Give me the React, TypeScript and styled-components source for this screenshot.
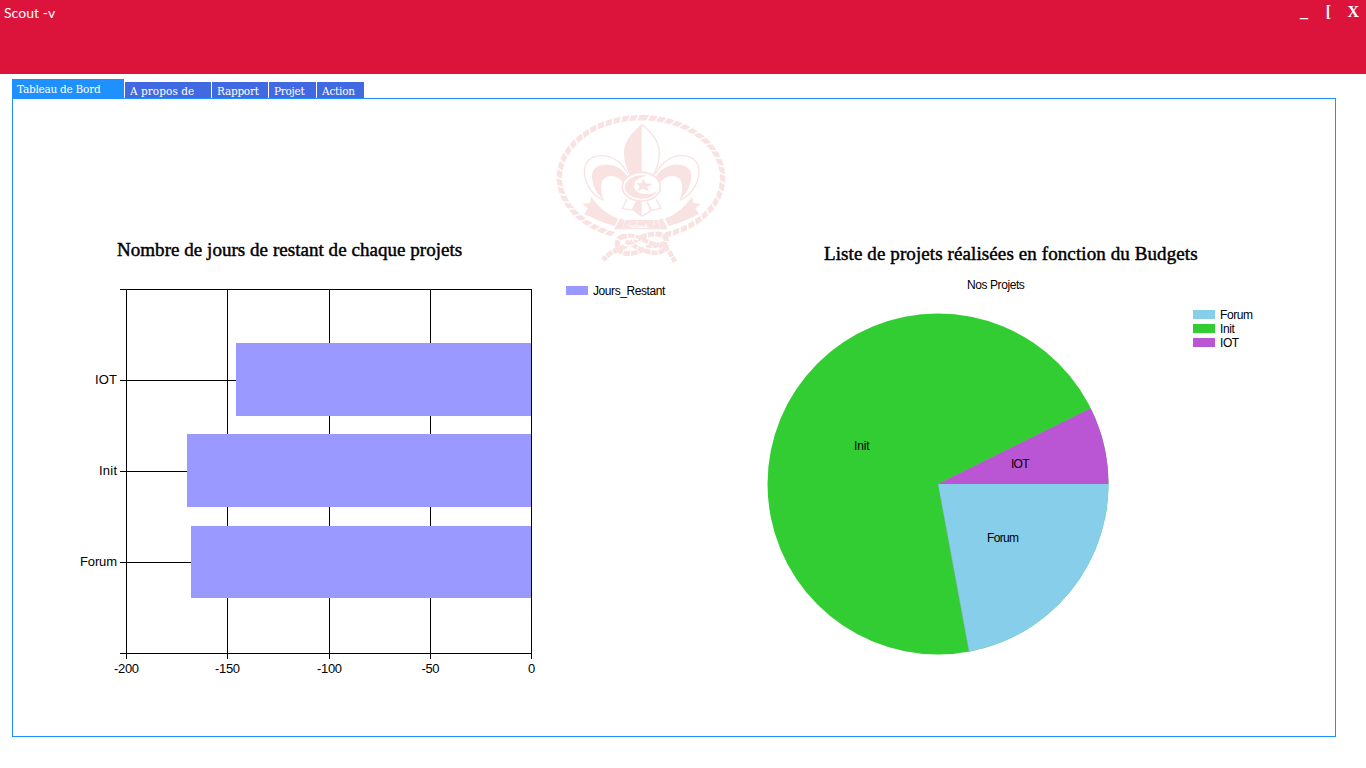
import React from 'react';
import styled, { createGlobalStyle } from 'styled-components';

const GlobalStyle = createGlobalStyle`
  * { box-sizing: border-box; }
  body { margin: 0; background: #fff; overflow: hidden; }
`;

const sans = '"Liberation Sans", Arial, sans-serif';
const serif = '"Liberation Serif", "Times New Roman", serif';

const Window = styled.div`
  width: 1366px;
  height: 768px;
  display: flex;
  flex-direction: column;
  background: #fff;
`;

const TitleBar = styled.header`
  height: 74px;
  flex: none;
  display: flex;
  justify-content: space-between;
  align-items: flex-start;
  background: #dc143c;
  color: #fff;
`;

const AppName = styled.h1`
  margin: 3px 0 0 4px;
  font: 400 14px/20px Lato, sans-serif;
  letter-spacing: 0.05px;
`;

const WindowControls = styled.div`
  display: flex;
  padding: 3px 7px 0 0;
`;

const ControlButton = styled.button<{ $width: number }>`
  width: ${(p) => p.$width}px;
  padding: 0;
  border: 0;
  background: none;
  color: #fff;
  font: 700 16px/18px ${serif};
  text-align: right;
`;

const TabBar = styled.nav`
  display: flex;
  align-items: flex-end;
  gap: 1px;
  height: 24px;
  flex: none;
  margin-left: 12px;
`;

const Tab = styled.button<{ $width: number; $active?: boolean; $spacing: number }>`
  width: ${(p) => p.$width}px;
  height: ${(p) => (p.$active ? 19 : 16)}px;
  padding: ${(p) => (p.$active ? 4 : 3)}px 0 0 5px;
  border: 0;
  background: ${(p) => (p.$active ? '#1e90ff' : '#4169e1')};
  color: #fff;
  font: 400 10.5px/13px "DejaVu Serif", serif;
  letter-spacing: ${(p) => p.$spacing}px;
  text-align: left;
  white-space: nowrap;
  display: flex;
`;

const Panel = styled.main`
  width: 1324px;
  height: 639px;
  flex: none;
  margin-left: 12px;
  border: 1px solid #1e90ff;
  display: grid;
  grid-template-columns: 532px 200px 1fr;
`;

const BarColumn = styled.section`
  padding-top: 139px;
`;

const CenterColumn = styled.section`
  padding-top: 6px;
`;

const PieColumn = styled.section`
  padding-top: 143px;
`;

const Heading = styled.h2<{ $indent: number; $spacing: number }>`
  margin: 0 0 0 ${(p) => p.$indent}px;
  font: 400 19px/24px ${serif};
  letter-spacing: ${(p) => p.$spacing}px;
  -webkit-text-stroke: 0.45px #000;
  white-space: nowrap;
`;

const Drawing = styled.svg`
  display: block;
  flex: none;
`;

const AxisText = styled.text`
  font: 13px ${sans};
`;

const SliceText = styled.text`
  font: 12px ${sans};
`;

const BarDrawing = styled(Drawing)`
  margin-top: 8px;
`;

const Subtitle = styled.p`
  margin: 12px 0 0 222px;
  font: 12px/14px ${sans};
  letter-spacing: -0.42px;
`;

const PieRow = styled.div`
  display: flex;
  gap: 73px;
  margin: 13px 0 0 15px;
`;

const Legend = styled.ul<{ $top: number; $left: number }>`
  margin: ${(p) => p.$top}px 0 0 ${(p) => p.$left}px;
  padding: 0;
  list-style: none;
`;

const LegendItem = styled.li`
  display: flex;
  align-items: center;
  gap: 5px;
  height: 14px;
  font: 12px/14px ${sans};
  letter-spacing: -0.42px;
`;

const Swatch = styled.span<{ $color: string }>`
  width: 22px;
  height: 9px;
  margin-top: -1px;
  background: ${(p) => p.$color};
`;

const tabs = [
  { label: 'Tableau de Bord', width: 112, spacing: -0.25 },
  { label: 'A propos de', width: 86, spacing: 0.05 },
  { label: 'Rapport', width: 56, spacing: -0.25 },
  { label: 'Projet', width: 47, spacing: -0.3 },
  { label: 'Action', width: 47, spacing: -0.2 },
];

const bars = [
  { label: 'IOT', x: 236, y: 343, h: 73, line: 380, lx: 95, lw: 22 },
  { label: 'Init', x: 187, y: 434, h: 73, line: 471, lx: 99, lw: 18 },
  { label: 'Forum', x: 191, y: 526, h: 72, line: 562, lx: 80, lw: 37 },
];

const ticks = [
  { label: '-200', x: 126, w: 25 },
  { label: '-150', x: 227, w: 25 },
  { label: '-100', x: 329, w: 25 },
  { label: '-50', x: 430, w: 18 },
  { label: '0', x: 531, w: 7 },
];

const series = [
  { label: 'Forum', color: '#87ceeb' },
  { label: 'Init', color: '#32cd32' },
  { label: 'IOT', color: '#ba55d3' },
];

function BarChart() {
  return (
    <BarDrawing width="532" height="420" viewBox="13 270 532 420">
      <g shapeRendering="crispEdges">
        {ticks.map((t) => (
          <rect key={t.label} x={t.x} y="289" width="1" height="370" />
        ))}
        <rect x="120" y="289" width="412" height="1" />
        <rect x="120" y="653" width="412" height="1" />
        {bars.map((b) => (
          <g key={b.label}>
            <rect x="120" y={b.line} width="200" height="1" />
            <rect x={b.x} y={b.y} width={531 - b.x} height={b.h} fill="#9999ff" />
          </g>
        ))}
      </g>
      {bars.map((b) => (
        <AxisText key={b.label} x={b.lx} y={b.line + 4} textLength={b.lw}>
          {b.label}
        </AxisText>
      ))}
      {ticks.map((t) => (
        <AxisText key={t.label} x={t.x + 0.5} y="673" textAnchor="middle" textLength={t.w}>
          {t.label}
        </AxisText>
      ))}
    </BarDrawing>
  );
}

function PieChart() {
  return (
    <Drawing width="360" height="360" viewBox="760 305 360 360">
      <circle cx="938" cy="484" r="170.5" fill="#32cd32" />
      <path d="M938 484H1108.5A170.5 170.5 0 0 1 969 651.7Z" fill="#87ceeb" />
      <path d="M938 484L1090.7 408.2A170.5 170.5 0 0 1 1108.5 484Z" fill="#ba55d3" />
      <path d="M938 484L1090.7 408.2M938 484L969 651.7" stroke="#8f9a9f" strokeOpacity="0.5" strokeWidth="0.7" />
      <SliceText x="854" y="450" textLength="15.5">Init</SliceText>
      <SliceText x="1011" y="468" textLength="18.5">IOT</SliceText>
      <SliceText x="987" y="542" textLength="32">Forum</SliceText>
    </Drawing>
  );
}

const pink = '#f8e3e2';

// Slanted strands laid at equal distances along the oval rope.
function ropeStrands() {
  const cx = 363;
  const cy = 218;
  const steps = 3600;
  const pitch = 25.2;
  const point = (a: number, grow: number) => {
    const x = cx + (245 + grow) * Math.sin(a);
    const y = cy - (180 + grow) * Math.cos(a);
    return `${x.toFixed(1)} ${y.toFixed(1)}`;
  };
  const strands: string[] = [];
  let travelled = pitch;
  for (let i = 0; i < steps; i++) {
    const a = (i / steps) * Math.PI * 2;
    const speed = Math.hypot(245 * Math.cos(a), 180 * Math.sin(a));
    travelled += (speed * Math.PI * 2) / steps;
    if (travelled < pitch) continue;
    travelled -= pitch;
    if (Math.abs(a - Math.PI) < 0.3) continue;
    const length = 20 / speed;
    const slant = 4 / speed;
    strands.push(
      `M${point(a + slant, 8)}L${point(a + slant + length, 8)}L${point(a - slant + length, -8)}L${point(a - slant, -8)}Z`,
    );
  }
  return strands.join('');
}

function Emblem() {
  return (
    <Drawing width="200" height="170" viewBox="75 0 600 510" fill="none">
      {/* rope ring */}
      <path d={ropeStrands()} fill={pink} />
      {/* centre petal */}
      <path d="M365 58C326 92 312 115 312 145Q312 178 331 213Q346 202 365 202Z" fill={pink} />
      <path d="M365 58C405 92 418 115 418 145Q418 178 399 213" stroke={pink} strokeWidth="4" />
      {/* side petals */}
      {['', 'translate(730 0) scale(-1 1)'].map((transform) => (
        <g key={transform} transform={transform}>
          <path d="M324 207C305 169 273 151 243 152C213 153 192 172 193 201C195 240 220 275 252 286" stroke={pink} strokeWidth="4" />
          <path d="M322 214C302 186 278 177 253 179C225 181 215 198 216 216C218 246 233 270 251 284C241 259 240 235 251 222C264 209 288 208 309 231Z" fill={pink} />
          <path d="M214 275L210 293L187 297L204 310L193 327Q237 350 284 363L295 341Q247 324 214 275Z" fill={pink} />
          <path d="M321 283L307 310L336 316L349 291" stroke={pink} strokeWidth="4" />
        </g>
      ))}
      <path d="M348 287L337 316L365 335V290Z" fill={pink} />
      <path d="M382 290L393 317L365 335" stroke={pink} strokeWidth="4" />
      {/* medallion with crescent and star */}
      <ellipse cx="364" cy="245" rx="57" ry="43" fill="#fff" stroke={pink} strokeWidth="5" />
      <path d="M382 212C347 207 314 222 314 246C314 271 348 285 379 280C396 277 407 268 410 259C386 275 342 268 342 244C342 224 363 215 382 212Z" fill={pink} />
      <path d="M369 221L377 235L399 237L382 245L387 260L370 251L352 259L359 244L348 234L365 235Z" fill={pink} />
      {/* motto ribbon */}
      <path d="M302 340L315 345H413L428 340L443 373H281Z" fill={pink} />
      <path d="M298 338L315 345L307 370M431 338L413 345L422 370" stroke="#fff" strokeWidth="1.5" />
      <path d="M402 350V362M325 359Q328 369 337 362L343 365L349 359L353 365H374Q384 363 378 358M335 367H386M327 354H331M349 352H354" stroke="#fff" strokeWidth="2.5" />
      {/* knot */}
      <path d="M313 394C285 396 286 436 309 443C342 453 363 434 389 426C419 416 439 422 439 406C437 388 411 383 380 391C350 399 322 423 293 434C275 441 263 449 249 465" stroke={pink} strokeWidth="15" strokeDasharray="20 3" />
      <path d="M303 397C334 386 357 399 380 409C405 420 437 424 449 442Q456 453 465 470" stroke={pink} strokeWidth="14" strokeDasharray="19 3" />
      <path d="M317 410C337 416 354 433 382 440C414 448 438 441 441 420" stroke={pink} strokeWidth="13" strokeDasharray="18 3" />
      <path d="M304 416Q321 426 341 419M371 425Q391 437 419 428M323 400Q345 399 355 405M386 404Q405 396 424 408" stroke="#fff" strokeWidth="4" />
    </Drawing>
  );
}

export default function App() {
  return (
    <Window>
      <GlobalStyle />
      <TitleBar>
        <AppName>Scout -v</AppName>
        <WindowControls>
          <ControlButton $width={20}>_</ControlButton>
          <ControlButton $width={23}>[</ControlButton>
          <ControlButton $width={28}>X</ControlButton>
        </WindowControls>
      </TitleBar>
      <TabBar>
        {tabs.map((t, i) => (
          <Tab key={t.label} $width={t.width} $active={i === 0} $spacing={t.spacing}>
            {t.label}
          </Tab>
        ))}
      </TabBar>
      <Panel>
        <BarColumn>
          <Heading $indent={104} $spacing={0.04}>Nombre de jours de restant de chaque projets</Heading>
          <BarChart />
        </BarColumn>
        <CenterColumn>
          <Emblem />
          <Legend $top={9} $left={21}>
            <LegendItem>
              <Swatch $color="#9999ff" />
              Jours_Restant
            </LegendItem>
          </Legend>
        </CenterColumn>
        <PieColumn>
          <Heading $indent={79} $spacing={0.1}>Liste de projets réalisées en fonction du Budgets</Heading>
          <Subtitle>Nos Projets</Subtitle>
          <PieRow>
            <PieChart />
            <Legend $top={3} $left={0}>
              {series.map((s) => (
                <LegendItem key={s.label}>
                  <Swatch $color={s.color} />
                  {s.label}
                </LegendItem>
              ))}
            </Legend>
          </PieRow>
        </PieColumn>
      </Panel>
    </Window>
  );
}
